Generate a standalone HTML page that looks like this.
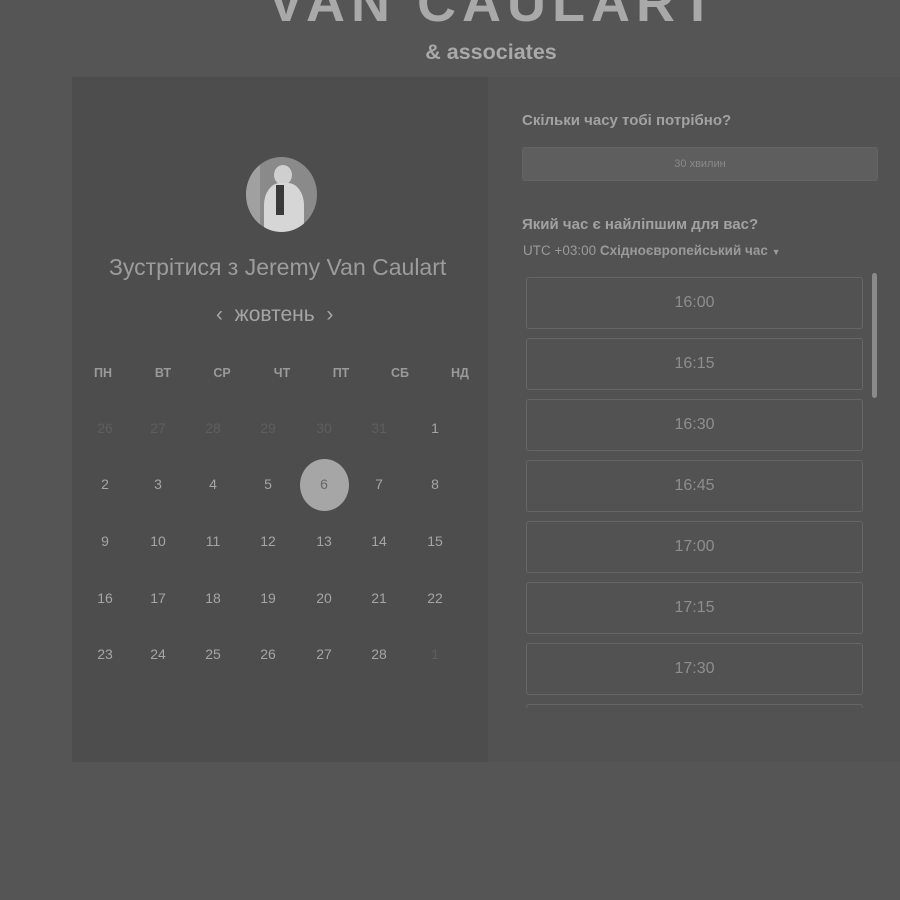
<!DOCTYPE html>
<html><head><meta charset="utf-8"><style>
*{margin:0;padding:0;box-sizing:border-box}
body{width:900px;height:900px;background:#555;font-family:"Liberation Sans",sans-serif;position:relative;overflow:hidden;color:#aaa}
.a{position:absolute;white-space:nowrap}
.logo{left:44px;width:900px;text-align:center;top:-27px;font-size:54px;line-height:60px;font-weight:bold;letter-spacing:6px;color:#a9a9a9}
.sub{left:0;width:982px;text-align:center;top:40px;font-size:21.5px;font-weight:bold;color:#a9a9a9}
.left{left:72px;top:77px;width:416px;height:685px;background:#4d4d4d}
.right{left:488px;top:77px;width:412px;height:685px;background:#525252}
.h{font-size:12.5px;font-weight:bold;color:#9a9a9a;transform:translateX(-50%)}
.d{font-size:14px;color:#a5a5a5;transform:translateX(-50%)}
.g{color:#5e5e5e}
.slot{left:526px;width:337px;height:52px;border:1px solid #666;border-radius:3px;text-align:center;line-height:50px;font-size:16px;color:#8e8e8e}
</style></head><body>
<div class="a logo">VAN CAULART</div>
<div class="a sub">&amp; associates</div>
<div class="a left"></div>
<div class="a right"></div>
<div class="a" style="left:246px;top:157px;width:71px;height:75px;border-radius:50%;overflow:hidden;background:#8a8a8a">
<div style="position:absolute;left:28px;top:8px;width:18px;height:20px;border-radius:50%;background:#cfcfcf"></div>
<div style="position:absolute;left:18px;top:26px;width:40px;height:55px;border-radius:40% 40% 0 0;background:#d6d6d6"></div>
<div style="position:absolute;left:30px;top:28px;width:8px;height:30px;background:#3a3a3a"></div>
<div style="position:absolute;left:0;top:0;width:14px;height:75px;background:#a0a0a0"></div>
</div>
<div class="a" style="left:109px;top:254px;font-size:23px;color:#9c9c9c">Зустрітися з <span style="font-weight:300">Jeremy Van Caulart</span></div>
<div class="a" style="left:216px;top:303px;font-size:21px;color:#a5a5a5">‹ &nbsp;жовтень&nbsp; ›</div>
<div class="a h" style="left:103px;top:366px">ПН</div><div class="a h" style="left:163px;top:366px">ВТ</div><div class="a h" style="left:222px;top:366px">СР</div><div class="a h" style="left:282px;top:366px">ЧТ</div><div class="a h" style="left:341px;top:366px">ПТ</div><div class="a h" style="left:400px;top:366px">СБ</div><div class="a h" style="left:460px;top:366px">НД</div>
<div class="a" style="left:300px;top:459px;width:49px;height:52px;border-radius:50%;background:#a6a6a6"></div>
<div id="cal"></div>
<div class="a" style="left:522px;top:112px;font-size:15px;font-weight:bold;color:#a2a2a2">Скільки часу тобі потрібно?</div>
<div class="a" style="left:522px;top:147px;width:356px;height:34px;background:#5e5e5e;border:1px solid #646464;border-radius:3px;text-align:center;line-height:32px;font-size:11px;color:#8a8a8a">30 хвилин</div>
<div class="a" style="left:522px;top:216px;font-size:15px;font-weight:bold;color:#a2a2a2">Який час є найліпшим для вас?</div>
<div class="a" style="left:523px;top:243px;font-size:13.5px;color:#9a9a9a">UTC +03:00 <b>Східноєвропейський час</b> <span style="font-size:9px">▼</span></div>
<div class="a" style="left:526px;top:273px;width:346px;height:435px;overflow:hidden">
<div id="slots"></div></div>
<div class="a" style="left:872px;top:273px;width:5px;height:125px;background:#8a8a8a;border-radius:3px"></div>
<script>
var xs=[105,158,213,268,324,379,435],ys=[420,476,533,590,646],h='';
var rows=[[26,27,28,29,30,31,1],[2,3,4,5,6,7,8],[9,10,11,12,13,14,15],[16,17,18,19,20,21,22],[23,24,25,26,27,28,1]];
rows.forEach(function(r,i){r.forEach(function(n,j){var g=(i==0&&j<6)||(i==4&&j==6);var st=(i==1&&j==4)?'color:#666;':'';h+='<div class="a d'+(g?' g':'')+'" style="'+st+'left:'+xs[j]+'px;top:'+ys[i]+'px">'+n+'</div>'})});
document.getElementById('cal').innerHTML=h;
var t=['16:00','16:15','16:30','16:45','17:00','17:15','17:30','17:45'],s='';
t.forEach(function(x,i){s+='<div class="a slot" style="left:0;top:'+(4+i*61)+'px">'+x+'</div>'});
document.getElementById('slots').innerHTML=s;
</script>
</body></html>
